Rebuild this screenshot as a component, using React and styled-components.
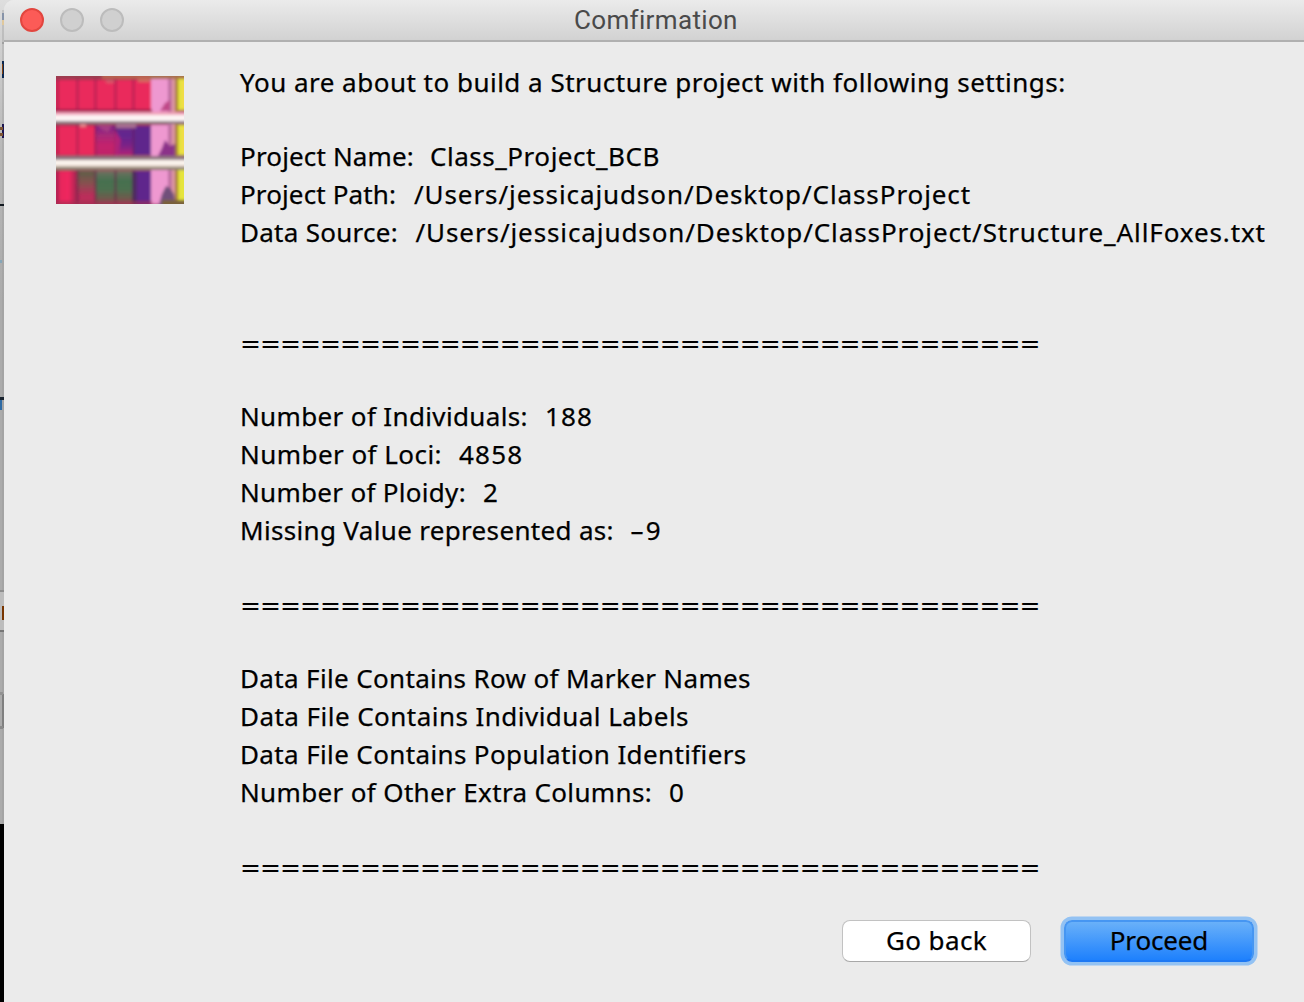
import React from "react";
import styled, { createGlobalStyle } from "styled-components";

const GlobalStyle = createGlobalStyle`
  html, body { margin: 0; padding: 0; overflow: hidden; background: #000; }
  * { box-sizing: border-box; }
`;

const Screen = styled.div`
  display: flex;
  width: 1304px;
  height: 1002px;
  overflow: hidden;
  background: linear-gradient(#dedede 0, #d0d0d0 42px, #b8b8b8 150px, #ababab 300px, #ababab 824px, #000 824px);
`;

const Behind = styled.div`
  width: 4px;
  flex: none;
  height: 1002px;
`;

const Window = styled.section`
  flex: 1;
  display: flex;
  flex-direction: column;
  border-top-left-radius: 10px;
  background: #ebebeb;
  overflow: hidden;
`;

const TitleBar = styled.header`
  flex: none;
  height: 42px;
  display: grid;
  grid-template-columns: 570px 1fr;
  align-items: center;
  background: linear-gradient(#ebebeb, #d2d2d2);
  border-bottom: 2px solid #b0b0b0;
`;

const Lights = styled.div`
  display: flex;
  gap: 16px;
  padding-left: 16px;
`;

const Light = styled.span`
  width: 24px;
  height: 24px;
  border-radius: 50%;
  border: 2px solid ${(p) => (p.$close ? "#e2463f" : "#bcbcbc")};
  background: ${(p) => (p.$close ? "#fc5b57" : "#d0d0d0")};
`;

const Title = styled.h1`
  margin: 0;
  padding-top: 1px;
  font: 400 26px/39px Roboto, sans-serif;
  letter-spacing: 0.34px;
  color: #4a4a4a;
`;

const Body = styled.div`
  display: grid;
  grid-template-columns: 128px 1fr;
  column-gap: 56px;
  padding: 21px 0 0 52px;
`;

const Artwork = styled.svg`
  display: block;
  margin-top: 13px;
`;

const Message = styled.div`
  display: flex;
  flex-direction: column;
  gap: 36px;
  font: 26px "Noto Sans", sans-serif;
  -webkit-text-stroke: 0.25px #000;
  color: #000;
`;

const Group = styled.div`
  margin-top: ${(p) => (p.$extra ? p.$extra : 0)}px;
`;

const Row = styled.div`
  display: flex;
  height: 38px;
  line-height: 38px;
  white-space: pre;
`;

const Label = styled.span`
  flex: none;
  width: ${(p) => (p.$width ? `${p.$width}px` : "auto")};
  letter-spacing: ${(p) => p.$track}px;
`;

const Value = styled.span`
  letter-spacing: ${(p) => p.$track}px;
`;

const Rule = styled.div`
  height: 38px;
  padding-top: 2px;
  font: 25px/38px "DejaVu Sans", sans-serif;
  letter-spacing: -0.96px;
  -webkit-text-stroke: 0;
  white-space: pre;
`;

const Actions = styled.footer`
  display: flex;
  justify-content: flex-end;
  gap: 33px;
  padding: 35px 50px 0 0;
`;

const Button = styled.button`
  width: ${(p) => (p.$primary ? 190 : 189)}px;
  height: 42px;
  padding: 0 0 2px;
  border: ${(p) => (p.$primary ? "2px solid #4696f2" : "1.5px solid #c2c2c2")};
  border-bottom-color: ${(p) => (p.$primary ? "#1d78f4" : "#a8a8a8")};
  border-radius: 8px;
  background: ${(p) => (p.$primary ? "linear-gradient(#6db3f9, #1a7efd)" : "#fff")};
  background-origin: border-box;
  box-shadow: ${(p) => (p.$primary ? "0 0 0 3.5px #93c2f3" : "none")};
  font: 26px/36px "Noto Sans", sans-serif;
  -webkit-text-stroke: 0.25px #000;
  letter-spacing: ${(p) => (p.$primary ? -0.15 : 0.4)}px;
  color: #000;
`;

const groups = [
  {
    rows: [{ label: "You are about to build a Structure project with following settings:", track: 0.49 }],
  },
  {
    rows: [
      { label: "Project Name:", track: 0.15, width: 190, value: "Class_Project_BCB", valueTrack: 0.53 },
      { label: "Project Path:", track: 0.12, width: 174, value: "/Users/jessicajudson/Desktop/ClassProject", valueTrack: 0.91 },
      { label: "Data Source:", track: 0.27, width: 175.5, value: "/Users/jessicajudson/Desktop/ClassProject/Structure_AllFoxes.txt", valueTrack: 0.9 },
    ],
  },
  { rule: true, extra: 36 },
  {
    rows: [
      { label: "Number of Individuals:", track: 0.36, width: 305, value: "188", valueTrack: 1.1 },
      { label: "Number of Loci:", track: 0.45, width: 219, value: "4858", valueTrack: 1.2 },
      { label: "Number of Ploidy:", track: 0.3, width: 243, value: "2", valueTrack: 0 },
      { label: "Missing Value represented as:", track: 0.33, width: 390.5, value: "–9", valueTrack: 2.2 },
    ],
  },
  { rule: true },
  {
    rows: [
      { label: "Data File Contains Row of Marker Names", track: 0.35 },
      { label: "Data File Contains Individual Labels", track: 0.46 },
      { label: "Data File Contains Population Identifiers", track: 0.37 },
      { label: "Number of Other Extra Columns:", track: 0.35, width: 429, value: "0", valueTrack: 0 },
    ],
  },
  { rule: true },
];

const panels = [
  { y: 0, h: 36, bars: ["#ea295c", "#ea295c", "#ea295c", "#ea295c", "#ea295c"] },
  { y: 46, h: 35, bars: ["#ea295c", "#ea295c", "url(#magenta)", "url(#violet)", "#5e258c"] },
  { y: 91, h: 37, bars: ["url(#rose)", "url(#mossRed)", "url(#moss)", "url(#moss)", "#5e258c"] },
];
const barX = [0, 21, 39, 59, 77, 96];

function Blend({ id, stops, across }) {
  return (
    <linearGradient id={id} x1="0" y1="0" x2={across ? 1 : 0} y2={across ? 0 : 1}>
      {stops.map((c, i) => (
        <stop key={i} offset={i / (stops.length - 1)} stopColor={c} />
      ))}
    </linearGradient>
  );
}

function StructurePlot() {
  return (
    <Artwork width="128" height="128" viewBox="0 0 128 128">
      <defs>
        <Blend id="magenta" stops={["#7c2088", "#a82a78", "#c4206c", "#c0206a"]} />
        <Blend id="violet" stops={["#6a2a88", "#62278f", "#7a2086", "#b02078"]} />
        <Blend id="rose" across stops={["#b02858", "#e8265c", "#f0265e", "#a02850"]} />
        <Blend id="mossRed" stops={["#5a6048", "#87504f", "#bb2c5a", "#b83058"]} />
        <Blend id="moss" stops={["#707060", "#457050", "#4c7050", "#70584c", "#a03858"]} />
        <filter id="soften" x="-5%" y="-5%" width="110%" height="110%">
          <feGaussianBlur stdDeviation="1.4" />
        </filter>
      </defs>
      <rect width="128" height="128" fill="#b3385c" />
      <g filter="url(#soften)">
        <rect x="-4" y="-4" width="136" height="136" fill="#fbeef0" />
        {panels.map((p, r) => (
          <g key={p.y}>
            <rect x="-4" y={r ? p.y : -4} width="136" height={(r === 2 ? p.h + 4 : p.h) + (r ? 0 : 4)} fill="#a22a55" />
            {p.bars.map((c, i) => (
              <rect key={i} x={barX[i] + (i ? 0 : -4)} y={p.y + 4} width={barX[i + 1] - barX[i] + (i ? 0 : 4)} height={p.h - (r === 2 ? 0 : 6)} fill={c} />
            ))}
            {barX.slice(1, 5).map((x) => (
              <rect key={x} x={x - 1} y={p.y + 2} width="3" height={p.h - 2} fill="#6c1848" opacity={r === 2 ? 0.42 : 0.3} />
            ))}
            <rect x="0" y={p.y} width="3" height={p.h} fill="#801c46" opacity=".45" />
            <rect x="95" y={p.y + 3} width="18" height={p.h - 3} fill="#ee98d0" />
            <rect x="112" y={p.y + 2} width="4" height={p.h - 2} fill="#bd70a3" />
            <rect x="116" y={p.y + 1} width="5" height={p.h - 1} fill="#e29ba4" />
            <rect x="119" y={p.y} width="4" height={p.h} fill="#a47828" />
            <rect x="122" y={p.y + 3} width="10" height={p.h - 5} fill="#e5e43e" />
            {r < 2 && <rect x="126" y={p.y + 5} width="6" height={p.h - 9} fill="#f3da4a" />}
          </g>
        ))}
        <rect x="-4" y="-2" width="50" height="5" fill="#9c3c50" />
        <rect x="46" y="-2" width="48" height="5" fill="#b86450" />
        <rect x="94" y="-4" width="40" height="7" fill="#a8704c" />
        <rect x="50" y="4" width="8" height="3" fill="#d8586a" />
        <rect x="82" y="3" width="12" height="3" fill="#d06c60" />
        <path d="M104 35 L109 27 L114 24 L114 35Z" fill="#c04888" />
        <rect x="-4" y="33" width="100" height="3" fill="#a51f50" />
        <rect x="-4" y="36" width="136" height="3" fill="#f0a0b8" />
        <rect x="-4" y="39" width="136" height="6" fill="#fdf4f4" />
        <rect x="-4" y="45" width="136" height="3" fill="#8d7880" />
        <path d="M102 80 L106 72 L109 64 L114 70 L119 68 L119 80Z" fill="#8b3289" />
        <path d="M40 49 L56 49 L52 56 L47 54Z" fill="#b04a84" opacity=".7" />
        <rect x="24" y="48" width="6" height="3" fill="#e48288" />
        <rect x="60" y="48" width="20" height="4" fill="#a86c90" />
        <path d="M59 54 L65 64 L62 80 L59 80Z" fill="#b02078" />
        <rect x="-4" y="80" width="136" height="4" fill="#8e7480" />
        <rect x="-4" y="84" width="136" height="5" fill="#fcf5ee" />
        <rect x="-4" y="89" width="136" height="2" fill="#e0d0c4" />
        <rect x="-4" y="91" width="136" height="3" fill="#8a8070" />
        <path d="M102 132 L106 118 L110 110 L114 112 L118 118 L120 132Z" fill="#71507a" />
        <rect x="76" y="96" width="5" height="36" fill="#482c54" opacity=".7" />
        <rect x="-4" y="125" width="100" height="7" fill="#a03052" opacity=".6" />
        <rect x="106" y="124" width="26" height="8" fill="#79603a" />
      </g>
    </Artwork>
  );
}

const marks = [
  { y: 13, h: 7, c: "#8793a8" },
  { y: 20, h: 5, c: "#e0c89c" },
  { y: 42, h: 2, w: 4, c: "#a0a0a0" },
  { y: 61, h: 17, x: 2, w: 2, c: "#0b2850" },
  { y: 64, h: 10, x: 2, w: 1, c: "#824010" },
  { y: 124, h: 14, x: 2, w: 2, c: "#1c1550" },
  { y: 127, h: 3, x: 0, w: 3, c: "#7d5432" },
  { y: 133, h: 3, x: 0, w: 3, c: "#7d5432" },
  { y: 204, h: 2, x: 0, w: 4, c: "#111820" },
  { y: 260, h: 3, x: 0, w: 2, c: "#86a6b8" },
  { y: 397, h: 3, x: 0, w: 4, c: "#18222e" },
  { y: 400, h: 10, x: 0, w: 2, c: "#2d6aa4" },
  { y: 592, h: 38, x: 0, w: 4, c: "#bdbdbd" },
  { y: 590, h: 2, x: 0, w: 4, c: "#8e8e8e" },
  { y: 606, h: 14, x: 2, w: 2, c: "#793500" },
  { y: 630, h: 2, x: 0, w: 4, c: "#777" },
  { y: 694, h: 34, x: 2, w: 2, c: "#808080" },
  { y: 692, h: 3, x: 0, w: 3, c: "#929292" },
  { y: 726, h: 3, x: 0, w: 3, c: "#8a8a8a" },
];

export default function App() {
  return (
    <>
      <GlobalStyle />
      <Screen>
        <Behind>
          <svg width="4" height="1002" display="block">
            <rect x="2" y="10" width="2" height="814" fill="#999" opacity=".35" />
            {marks.map((m, i) => (
              <rect key={i} x={m.x ?? 2} y={m.y} width={m.w ?? 2} height={m.h} fill={m.c} />
            ))}
          </svg>
        </Behind>
        <Window>
          <TitleBar>
            <Lights>
              <Light $close />
              <Light />
              <Light />
            </Lights>
            <Title>Comfirmation</Title>
          </TitleBar>
          <Body>
            <StructurePlot />
            <Message>
              {groups.map((g, i) => (
                <Group key={i} $extra={g.extra}>
                  {g.rule ? (
                    <Rule>{"=".repeat(40)}</Rule>
                  ) : (
                    g.rows.map((r) => (
                      <Row key={r.label}>
                        <Label $width={r.width} $track={r.track}>{r.label}</Label>
                        {r.value && <Value $track={r.valueTrack}>{r.value}</Value>}
                      </Row>
                    ))
                  )}
                </Group>
              ))}
            </Message>
          </Body>
          <Actions>
            <Button>Go back</Button>
            <Button $primary>Proceed</Button>
          </Actions>
        </Window>
      </Screen>
    </>
  );
}
